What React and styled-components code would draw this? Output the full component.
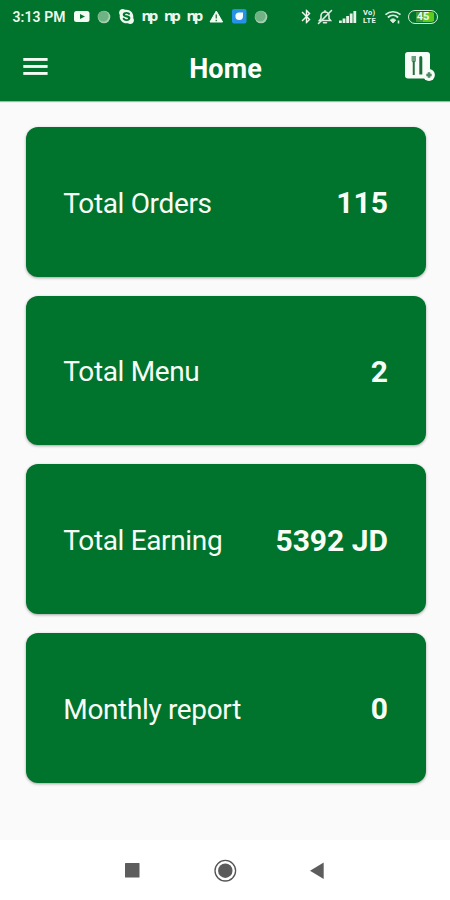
import React from 'react'
import styled, { createGlobalStyle } from 'styled-components'
import { FaSkype } from 'react-icons/fa'
import { MdBluetooth } from 'react-icons/md'

const stats = [
  { label: 'Total Orders', value: '115' },
  { label: 'Total Menu', value: '2' },
  { label: 'Total Earning', value: '5392 JD' },
  { label: 'Monthly report', value: '0' },
]

const YoutubeIcon = () => (
  <svg width='16' height='11' viewBox='0 0 16 11'>
    <rect width='15.5' height='11' rx='2.5' fill='#f4fbf4' />
    <path d='M6 3l5 2.5L6 8z' fill='#00732d' />
  </svg>
)

const SphereIcon = () => (
  <svg width='14' height='14' viewBox='0 0 14 14'>
    <circle cx='7' cy='7' r='6.3' fill='#a5cfb1' />
    <circle cx='6.3' cy='6.3' r='5.3' fill='#6fb284' />
  </svg>
)

const WarningIcon = () => (
  <svg width='16' height='13' viewBox='0 0 16 13'>
    <path
      d='M7.3 1l6.3 11H1z'
      fill='#f4fbf4'
      stroke='#f4fbf4'
      strokeLinejoin='round'
    />
    <path d='M7.3 4.5v4M7.3 9.7v1.6' stroke='#39804c' strokeWidth='1.5' />
  </svg>
)

const BlueAppIcon = () => (
  <svg width='15' height='15' viewBox='0 0 15 15'>
    <rect width='14.5' height='14.5' rx='2' fill='#2791e5' />
    <path d='M6.5 3.5H11v3.7a3.8 3.8 0 1 1-4.5-3.7z' fill='#f6fcff' />
  </svg>
)

const BellOffIcon = () => (
  <svg
    width='16'
    height='16'
    viewBox='0 0 16 16'
    fill='none'
    stroke='#dceee1'
    strokeWidth='1.6'
    strokeLinecap='round'
  >
    <path d='M2.5 11.5h11L12 9.5V6.7C12 4.5 10.3 3 8 3S4 4.5 4 6.7v2.8z' />
    <path d='M6.5 13.8h3M8 1.700V3M1.500 14.500l13-13' />
  </svg>
)

const SignalIcon = () => (
  <svg width='18' height='14' viewBox='0 0 18 14' fill='#e5f3e8'>
    <rect x='0' y='10.5' width='2.8' height='2.5' />
    <rect x='3.6' y='8.5' width='2.8' height='4.5' />
    <rect x='7.2' y='6' width='2.8' height='7' />
    <rect x='10.8' y='3.5' width='2.8' height='9.5' />
    <rect x='14.4' y='1' width='2.8' height='12' />
  </svg>
)

const WifiIcon = () => (
  <svg width='17' height='14' viewBox='0 0 17 14' fill='none' stroke='#dceee1'>
    <path d='M0.5 4.7c4.4-4 10.600-4 15 0' strokeWidth='1.6' />
    <path d='M2.900 7.500c3-2.800 7.200-2.800 10.200 0' strokeWidth='1.9' />
    <path d='M5.300 10c1.700-1.500 3.700-1.500 5.400 0l-2.700 2.900z' fill='#dceee1' />
    <path d='M13.500 10.500v3' strokeWidth='1.6' />
  </svg>
)

const MenuIcon = () => (
  <svg width='25' height='18' viewBox='0 0 25 18' fill='#f3fbf3'>
    <rect x='0.3' width='24.3' height='2.9' />
    <rect x='0.3' y='7' width='24.3' height='2.9' />
    <rect x='0.3' y='14' width='24.3' height='2.9' />
  </svg>
)

const AddDishIcon = () => (
  <svg width='32' height='30' viewBox='0 0 32 30'>
    <rect x='1' y='0' width='25' height='26.5' rx='3' fill='#f8fdf7' />
    <path d='M7.5 4h4.500v4.500q0 2-2.250 2t-2.250-2z' fill='#6f9f80' />
    <path d='M9.750 9v14' stroke='#286e43' strokeWidth='2' />
    <path d='M15.300 22.500V5.500q0-1.500 1.500-1.500t1.500 2v16.500z' fill='#186d38' />
    <circle cx='25' cy='23' r='5.9' fill='#f8fdf7' />
    <path d='M25 20.300v5.400M22.300 23h5.400' stroke='#4a8961' strokeWidth='2.6' />
  </svg>
)

const RecentsIcon = () => (
  <svg width='16' height='16' viewBox='0 0 16 16'>
    <rect x='0' y='1' width='14.5' height='14.5' rx='0.5' fill='#5d5d5d' />
  </svg>
)

const HomeIcon = () => (
  <svg width='24' height='24' viewBox='0 0 24 24'>
    <circle cx='12.3' cy='12.7' r='10.3' fill='none' stroke='#555' strokeWidth='1.3' />
    <circle cx='12.3' cy='12.7' r='7.2' fill='#5b5b5b' />
  </svg>
)

const BackIcon = () => (
  <svg width='16' height='18' viewBox='0 0 16 18'>
    <path d='M0 9.7L13.7 1.5v16.5z' fill='#5d5d5d' />
  </svg>
)

const App = () => (
  <>
    <GlobalStyle />
    <Screen>
      <StatusBar>
        <Time>3:13 PM</Time>
        <Notifications>
          <YoutubeIcon />
          <SphereIcon />
          <FaSkype size={17} />
          <NpLogo>np</NpLogo>
          <NpLogo>np</NpLogo>
          <NpLogo>np</NpLogo>
          <WarningIcon />
          <BlueAppIcon />
          <SphereIcon />
        </Notifications>
        <SystemIcons>
          <MdBluetooth size={17} />
          <BellOffIcon />
          <SignalIcon />
          <Volte>
            <span>Vo)</span>
            <span>LTE</span>
          </Volte>
          <WifiIcon />
          <Battery>45</Battery>
        </SystemIcons>
      </StatusBar>
      <AppBar>
        <BarButton aria-label='Menu'>
          <MenuIcon />
        </BarButton>
        <Title>Home</Title>
        <BarButton aria-label='Add dish' $end>
          <AddDishIcon />
        </BarButton>
      </AppBar>
      <StatList>
        {stats.map(({ label, value }) => (
          <StatCard key={label}>
            <Label>{label}</Label>
            <Value>{value}</Value>
          </StatCard>
        ))}
      </StatList>
      <NavBar>
        <NavButton aria-label='Recents'>
          <RecentsIcon />
        </NavButton>
        <NavButton aria-label='Home screen'>
          <HomeIcon />
        </NavButton>
        <NavButton aria-label='Back'>
          <BackIcon />
        </NavButton>
      </NavBar>
    </Screen>
  </>
)

const GlobalStyle = createGlobalStyle`
  * {
    box-sizing: border-box;
  }

  body {
    margin: 0;
    font-family: Roboto, 'Liberation Sans', sans-serif;
  }

  svg {
    display: block;
    flex-shrink: 0;
  }
`

const Screen = styled.div`
  display: flex;
  flex-direction: column;
  width: 450px;
  height: 900px;
  overflow: hidden;
  background: #fafafa;
`

const StatusBar = styled.header`
  display: flex;
  align-items: center;
  height: 33px;
  padding: 0 12px 0 12.5px;
  flex-shrink: 0;
  background: #00732d;
  color: #eef8ef;
`

const Time = styled.span`
  width: 61.5px;
  font-size: 14px;
  font-weight: 600;
  letter-spacing: 0.1px;
  line-height: 16px;
  white-space: nowrap;
`

const Notifications = styled.div`
  display: grid;
  grid-template-columns: repeat(9, 22.5px);
  align-items: center;
  justify-items: start;

  > svg:nth-child(3) {
    margin-left: -1px;
  }
`

const NpLogo = styled.span`
  width: 17px;
  height: 16px;
  font-family: 'Open Sans', sans-serif;
  font-size: 15px;
  font-weight: 700;
  line-height: 12px;
  letter-spacing: -2.5px;
`

const SystemIcons = styled.div`
  display: flex;
  align-items: center;
  gap: 6px;
  margin-left: auto;

  > svg:first-child {
    margin-right: -4px;
  }
`

const Volte = styled.div`
  display: flex;
  flex-direction: column;
  gap: 1px;
  width: 16px;
  font-size: 7.5px;
  font-weight: 700;
  letter-spacing: 0.3px;
  line-height: 7.5px;
`

const Battery = styled.div`
  width: 30px;
  height: 14px;
  border: 1.5px solid #dceedd;
  border-radius: 7px;
  background: linear-gradient(90deg, #00732d 25%, #3d9a35 25% 50%, #5fca20 50% 90%, #00732d 90%);
  box-shadow: inset 0 0 0 1px #00732d;
  font-size: 11px;
  font-weight: 700;
  line-height: 11px;
  text-align: center;
`

const AppBar = styled.div`
  display: grid;
  grid-template-columns: 1fr auto 1fr;
  align-items: center;
  height: 67.5px;
  padding: 0 14px 0 23px;
  flex-shrink: 0;
  background: #00732d;
  box-shadow: 0 1px 1px rgba(0, 60, 20, 0.35);
`

const BarButton = styled.button`
  justify-self: ${({ $end }) => ($end ? 'end' : 'start')};
  padding: 0;
  border: none;
  background: none;
`

const Title = styled.h1`
  margin: 4px 8px 0 0;
  color: #fff;
  font-size: 27px;
  font-weight: 700;
  letter-spacing: 0.1px;
  line-height: 32px;
`

const StatList = styled.main`
  display: flex;
  flex-direction: column;
  gap: 19.2px;
  flex: 1;
  padding: 26.5px 24.5px 0 25.8px;
`

const StatCard = styled.section`
  display: flex;
  align-items: center;
  justify-content: space-between;
  height: 149.5px;
  padding: 3px 37.5px 0 37.5px;
  border-radius: 12px;
  background: #00732d;
  box-shadow: 0 1px 3px rgba(0, 0, 0, 0.35);
  color: #f8fdf5;
`

const Label = styled.span`
  margin-top: 1px;
  font-size: 28px;
  letter-spacing: -0.35px;
  line-height: 34px;
`

const Value = styled.span`
  font-size: 30px;
  font-weight: 700;
  line-height: 34px;
`

const NavBar = styled.nav`
  display: flex;
  align-items: center;
  justify-content: center;
  height: 60px;
  flex-shrink: 0;
  background: #fff;
`

const NavButton = styled.button`
  display: flex;
  justify-content: center;
  width: 92.5px;
  padding: 0;
  border: none;
  background: none;
`

export default App
